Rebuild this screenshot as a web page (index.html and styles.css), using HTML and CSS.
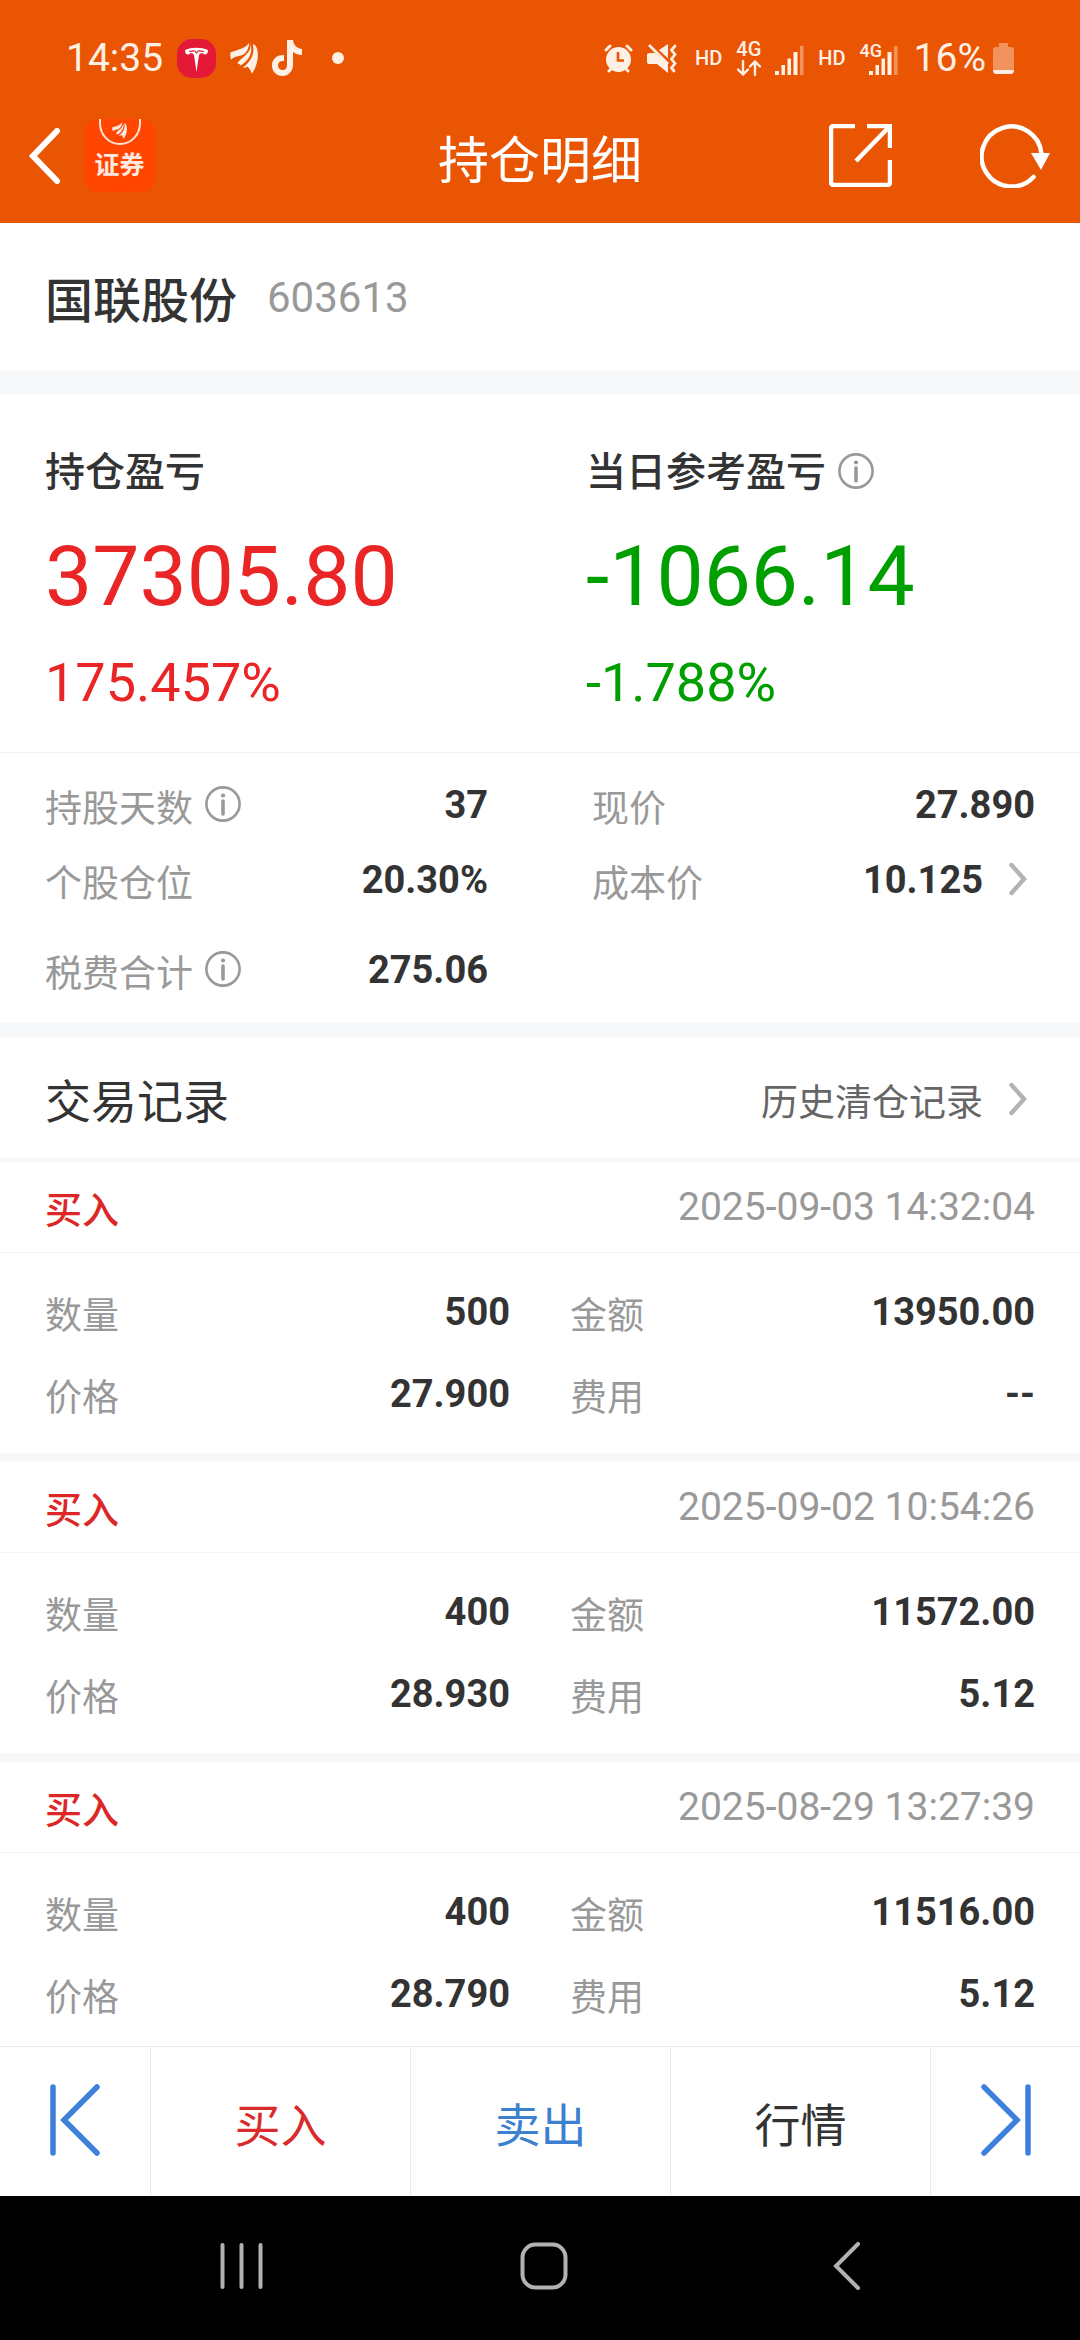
FILE: index.html
```html
<!DOCTYPE html>
<html lang="zh-CN">
<head>
  <meta charset="UTF-8">
  <meta name="viewport" content="width=device-width, initial-scale=1.0">
  <title>持仓明细</title>
  <link rel="stylesheet" href="styles.css">
</head>
<body>
  <svg class="sprite" aria-hidden="true">
    <symbol id="info" viewBox="0 0 36 36">
      <circle cx="18" cy="18" r="16.6" fill="none" stroke="#999" stroke-width="2.6"/>
      <circle cx="18" cy="9.5" r="2.1" fill="#999"/>
      <path d="M18 15v13" stroke="#999" stroke-width="3.6" stroke-linecap="round"/>
    </symbol>
    <symbol id="arrow" viewBox="0 0 18 34">
      <path d="M2.5 3L15 17L2.5 31" fill="none" stroke="#b3b3b3" stroke-width="4.4" stroke-linecap="round"/>
    </symbol>
    <symbol id="bird" viewBox="0 0 86 98">
      <path d="M59 2C48 20 16 26 1 32C0 40 1 48 4 54C12 44 28 44 38 40C50 34 58 20 59 2Z"/>
      <path d="M62 4C66 18 58 32 46 42C34 52 26 58 22 66C27 66 30 68 32 72C52 62 74 36 62 4Z"/>
      <path d="M70 6C84 10 87 30 85 50C83 68 76 86 67 97C64 88 60 80 53 75C48 80 44 80 40 78C62 62 78 38 70 6Z"/>
    </symbol>
    <symbol id="signal" viewBox="0 0 29 29">
      <path d="M0 25h4v4h-4zM6.5 19h3.5v10h-3.5zM12.5 12.5h3.5v16.5h-3.5zM18.5 6h4v23h-4z"/>
      <path d="M25 0h3.5v29h-3.5z" opacity=".4"/>
    </symbol>
  </svg>

  <div class="app">
    <header class="top">
      <div class="status">
        <div class="status-left">
          <span class="clock">14:35</span>
          <svg width="39" height="39" viewBox="0 0 39 39">
            <rect width="39" height="39" rx="15" fill="#e31937"/>
            <path d="M8 11C15 8 24 8 31 11L30.5 14C29 16 27 16 26 14.5C23 13.5 22 15 21.7 18L19.5 33L17.3 18C17 15 16 13.5 13 14.5C12 16 10 16 8.5 14Z" fill="#fff"/>
            <path d="M12 12.5Q16 11.5 18 12L19.5 14L21 12Q23 11.5 27 12.5" fill="none" stroke="#e31937" stroke-width="1.1"/>
          </svg>
          <svg class="cream" width="28" height="32"><use href="#bird"/></svg>
          <svg class="cream" width="30" height="36" viewBox="0 0 30 36">
            <path d="M15 0H21C21.5 5 25 8.5 30 9V15C26.5 15 23.5 14 21 12V25C21 31 16.5 36 10.5 36C4.5 36 0 31.5 0 25.5C0 19 5 14.5 12 15V21C8 20.5 6 22.5 6 25.5C6 28 8 30 10.5 30C13.5 30 15 28 15 25Z"/>
          </svg>
          <span class="dot"></span>
        </div>
        <div class="status-right">
          <svg class="cream" width="29" height="29" viewBox="0 0 29 29">
            <path d="M2 6L6 2M27 6L23 2M5 27L8 24M24 27L21 24" stroke="#fff0e6" stroke-width="3" stroke-linecap="round"/>
            <circle cx="14.5" cy="15.5" r="12.5"/>
            <path d="M14 8V16.5H20" fill="none" stroke="#e95503" stroke-width="2.6"/>
          </svg>
          <svg class="cream mute" width="30" height="29" viewBox="0 0 30 29">
            <path d="M0 11Q0 9 2 9H8L21 21V29L10 20H2Q0 20 0 18ZM12 6L21 0V14.5Z"/>
            <path d="M2 1L21 20" stroke="#fff0e6" stroke-width="2.6"/>
            <path d="M28 2L24.5 6L28 10.5L24.5 15L28 19.5L24.5 24L27 27" fill="none" stroke="#fff0e6" stroke-width="2.8" stroke-linecap="round"/>
          </svg>
          <span class="net">HD</span>
          <div class="net-stack">
            <span class="net">4G</span>
            <svg width="24" height="16" viewBox="0 0 24 16">
              <path d="M6 1V14M1 9.5L6 14.5L11 9.5M18 15V2M13 6.5L18 1.5L23 6.5" fill="none" stroke="#fff0e6" stroke-width="2.4" stroke-linecap="round"/>
            </svg>
          </div>
          <svg class="cream signal"><use href="#signal"/></svg>
          <span class="net">HD</span>
          <div class="net-overlap">
            <span class="net small">4G</span>
            <svg class="cream signal"><use href="#signal"/></svg>
          </div>
          <div class="battery">
            <span class="clock">16%</span>
            <svg class="cream" width="21" height="31" viewBox="0 0 21 31">
              <path d="M6 0H15V4H18Q21 4 21 7V27H0V7Q0 4 3 4H6Z" opacity=".4"/>
              <path d="M0 27H21Q21 31 18 31H3Q0 31 0 27Z"/>
            </svg>
          </div>
        </div>
      </div>

      <div class="nav">
        <div class="nav-left">
          <button class="icon-btn" aria-label="返回">
            <svg width="31" height="56" viewBox="0 0 31 56">
              <path d="M28 3L4 28L28 53" fill="none" stroke="#fff" stroke-width="6" stroke-linecap="round"/>
            </svg>
          </button>
          <div class="logo">
            <svg width="42" height="27" viewBox="0 0 42 27">
              <path d="M1 0V4C1 15 9 25 21 25S41 15 41 4V0" fill="none" stroke="#ffe3d8" stroke-width="2"/>
              <use href="#bird" x="13" y="3" width="15" height="17" fill="#ffe9e0"/>
            </svg>
            <span>证券</span>
          </div>
        </div>
        <h1 class="title">持仓明细</h1>
        <div class="nav-right">
          <button class="icon-btn" aria-label="分享">
            <svg width="63" height="63" viewBox="0 0 63 63">
              <path d="M26 2H5Q2 2 2 5V58Q2 61 5 61H58Q61 61 61 58V36M61 24V2H38M61 2L27 37" fill="none" stroke="#fff" stroke-width="4.5"/>
            </svg>
          </button>
          <button class="icon-btn" aria-label="刷新">
            <svg width="71" height="64" viewBox="0 0 71 64">
              <path d="M53.5 53A30 30 0 1 1 61.5 30" fill="none" stroke="#fff" stroke-width="4.5" stroke-linecap="round"/>
              <path d="M51 29H70L61 46Z" fill="#fff"/>
            </svg>
          </button>
        </div>
      </div>
    </header>

    <main class="content">
      <section class="stock">
        <h2 class="stock-name">国联股份</h2>
        <span class="stock-code">603613</span>
      </section>

      <section class="profit">
        <div class="profit-col red">
          <h3 class="profit-title">持仓盈亏</h3>
          <p class="profit-num">37305.80</p>
          <p class="profit-pct">175.457%</p>
        </div>
        <div class="profit-col green">
          <h3 class="profit-title">当日参考盈亏 <svg class="info"><use href="#info"/></svg></h3>
          <p class="profit-num">-1066.14</p>
          <p class="profit-pct">-1.788%</p>
        </div>
      </section>

      <dl class="details">
        <div class="pair"><dt>持股天数 <svg class="info"><use href="#info"/></svg></dt><dd>37</dd></div>
        <div class="pair"><dt>现价</dt><dd>27.890</dd></div>
        <div class="pair"><dt>个股仓位</dt><dd>20.30%</dd></div>
        <div class="pair"><dt>成本价</dt><dd>10.125 <svg class="arrow"><use href="#arrow"/></svg></dd></div>
        <div class="pair"><dt>税费合计 <svg class="info"><use href="#info"/></svg></dt><dd>275.06</dd></div>
      </dl>

      <section class="history">
        <h2 class="history-title">交易记录</h2>
        <a class="history-link" href="#">历史清仓记录 <svg class="arrow"><use href="#arrow"/></svg></a>
      </section>

      <article class="record">
        <div class="record-head"><h3>买入</h3><time>2025-09-03 14:32:04</time></div>
        <dl class="record-body">
          <div class="pair"><dt>数量</dt><dd>500</dd></div>
          <div class="pair"><dt>金额</dt><dd>13950.00</dd></div>
          <div class="pair"><dt>价格</dt><dd>27.900</dd></div>
          <div class="pair"><dt>费用</dt><dd>--</dd></div>
        </dl>
      </article>
      <article class="record">
        <div class="record-head"><h3>买入</h3><time>2025-09-02 10:54:26</time></div>
        <dl class="record-body">
          <div class="pair"><dt>数量</dt><dd>400</dd></div>
          <div class="pair"><dt>金额</dt><dd>11572.00</dd></div>
          <div class="pair"><dt>价格</dt><dd>28.930</dd></div>
          <div class="pair"><dt>费用</dt><dd>5.12</dd></div>
        </dl>
      </article>
      <article class="record">
        <div class="record-head"><h3>买入</h3><time>2025-08-29 13:27:39</time></div>
        <dl class="record-body">
          <div class="pair"><dt>数量</dt><dd>400</dd></div>
          <div class="pair"><dt>金额</dt><dd>11516.00</dd></div>
          <div class="pair"><dt>价格</dt><dd>28.790</dd></div>
          <div class="pair"><dt>费用</dt><dd>5.12</dd></div>
        </dl>
      </article>
    </main>

    <footer class="bottom">
      <div class="actions">
        <button class="step" aria-label="上一只">
          <svg width="50" height="72" viewBox="0 0 50 72">
            <path d="M3 3V69M47 3L14 36L47 69" fill="none" stroke="#3c80dc" stroke-width="5.5" stroke-linecap="round"/>
          </svg>
        </button>
        <button class="action buy">买入</button>
        <button class="action sell">卖出</button>
        <button class="action">行情</button>
        <button class="step" aria-label="下一只">
          <svg width="50" height="72" viewBox="0 0 50 72">
            <path d="M47 3V69M3 3L36 36L3 69" fill="none" stroke="#3c80dc" stroke-width="5.5" stroke-linecap="round"/>
          </svg>
        </button>
      </div>
      <div class="system">
        <button class="system-btn" aria-label="最近任务">
          <svg width="43" height="48" viewBox="0 0 43 48">
            <path d="M2.5 3V45M21.5 3V45M40.5 3V45" stroke="#b2b2b2" stroke-width="4" stroke-linecap="round"/>
          </svg>
        </button>
        <button class="system-btn" aria-label="主屏幕">
          <svg width="48" height="48" viewBox="0 0 48 48">
            <rect x="2.5" y="2.5" width="43" height="43" rx="13" fill="none" stroke="#b2b2b2" stroke-width="4"/>
          </svg>
        </button>
        <button class="system-btn" aria-label="返回上一级">
          <svg width="28" height="48" viewBox="0 0 28 48">
            <path d="M25 2L3 24L25 46" fill="none" stroke="#b2b2b2" stroke-width="4" stroke-linecap="round"/>
          </svg>
        </button>
      </div>
    </footer>
  </div>
</body>
</html>
```
FILE: styles.css
```css
* {
  box-sizing: border-box;
  margin: 0;
  padding: 0;
}
body {
  font-family: Roboto, "Noto Sans CJK SC", sans-serif;
  color: #333;
  background: #fff;
}
button {
  font-family: inherit;
  border: none;
  background: none;
  cursor: pointer;
}
svg {
  display: block;
  flex: none;
}
.sprite {
  display: none;
}
.app {
  display: flex;
  flex-direction: column;
  height: 100vh;
}

/* header */
.top {
  flex: none;
  background: #e95503;
  color: #fff;
}
.status {
  display: flex;
  justify-content: space-between;
  height: 88px;
  padding: 28px 66px 0;
  color: #fff0e6;
}
.status-left,
.status-right {
  display: flex;
  align-items: center;
  gap: 14px;
}
.cream {
  fill: #fff0e6;
}
.clock {
  font-size: 39px;
}
.dot {
  width: 12px;
  height: 12px;
  margin-left: 16px;
  border-radius: 50%;
  background: #fff0e6;
}
.mute {
  margin-right: 4px;
}
.net {
  font-size: 20px;
  font-weight: 500;
  line-height: 18px;
}
.small {
  font-size: 18px;
}
.net-stack {
  display: flex;
  flex-direction: column;
  align-items: center;
  gap: 2px;
}
.net-overlap {
  display: grid;
  width: 38px;
}
.net-overlap > * {
  grid-area: 1 / 1;
}
.net-overlap svg {
  justify-self: end;
  align-self: end;
}
.signal {
  width: 29px;
  height: 29px;
  margin-top: 4px;
}
.battery {
  display: flex;
  align-items: center;
  gap: 7px;
  margin-left: 2px;
}
.nav {
  display: grid;
  grid-template-columns: 1fr auto 1fr;
  align-items: center;
  height: 135px;
  padding: 0 29px;
}
.nav-left {
  display: flex;
  align-items: center;
  gap: 24px;
}
.nav-right {
  display: flex;
  align-items: center;
  justify-content: flex-end;
  gap: 88px;
}
.title {
  padding-top: 2px;
  font-size: 51px;
  font-weight: 400;
}
.logo {
  display: flex;
  flex-direction: column;
  align-items: center;
  width: 71px;
  height: 73px;
  border-radius: 14px;
  background: #ff4500;
  color: #ffe9e0;
  font-size: 25px;
  font-weight: 700;
  line-height: 40px;
}

/* content */
.content {
  flex: 1;
  min-height: 0;
  overflow-y: auto;
  scrollbar-width: none;
}
.stock {
  display: flex;
  align-items: center;
  gap: 30px;
  height: 147px;
  padding: 0 45px;
}
.stock-name {
  font-size: 48px;
  font-weight: 500;
}
.stock-code {
  padding-top: 2px;
  font-size: 42px;
  color: #999;
}
.profit {
  display: grid;
  grid-template-columns: 1fr 1fr;
  gap: 92px;
  padding: 51px 45px 39px;
  border-top: 24px solid #f7f8fa;
}
.profit-col {
  display: flex;
  flex-direction: column;
  gap: 26px;
}
.profit-title {
  display: flex;
  align-items: center;
  gap: 12px;
  font-size: 40px;
  font-weight: 500;
  line-height: 56px;
  color: #333;
}
.profit-num {
  font-size: 84px;
  line-height: 100px;
}
.profit-pct {
  font-size: 54px;
  line-height: 60px;
}
.red {
  color: #ea2525;
}
.green {
  color: #009f00;
}
.info {
  width: 36px;
  height: 36px;
  margin-bottom: 4px;
}
.arrow {
  width: 18px;
  height: 34px;
  margin: 0 8px 2px 14px;
}
.details {
  display: grid;
  grid-template-columns: 1fr 1fr;
  grid-auto-rows: 75px 75px 106px;
  column-gap: 104px;
  padding: 14px 45px 0;
  border-top: 1px solid #f2f2f2;
  border-bottom: 15px solid #f7f8fa;
}
.pair {
  display: flex;
  align-items: center;
  justify-content: space-between;
}
.pair dt {
  display: flex;
  align-items: center;
  gap: 12px;
  padding-top: 2px;
  font-size: 37px;
  color: #999;
}
.pair dd {
  display: flex;
  align-items: center;
  gap: 12px;
  font-size: 38px;
  font-weight: 700;
}
.history {
  display: flex;
  align-items: center;
  justify-content: space-between;
  height: 124px;
  padding: 0 45px;
  border-bottom: 4px solid #f7f8fa;
}
.history-title {
  font-size: 46px;
  font-weight: 400;
}
.history-link {
  display: flex;
  align-items: center;
  gap: 12px;
  padding-top: 4px;
  font-size: 37px;
  color: #666;
  text-decoration: none;
}
.record {
  border-bottom: 9px solid #f7f8fa;
}
.record-head {
  display: flex;
  align-items: center;
  justify-content: space-between;
  height: 91px;
  padding: 0 45px;
  border-bottom: 1px solid #f5f5f5;
}
.record-head h3 {
  padding-top: 2px;
  font-size: 37px;
  font-weight: 500;
  color: #dd2727;
}
.record-head time {
  font-size: 39px;
  color: #999;
}
.record-body {
  display: grid;
  grid-template-columns: 1fr 1fr;
  grid-auto-rows: 82px;
  column-gap: 60px;
  padding: 18px 45px;
}

/* footer */
.bottom {
  flex: none;
}
.actions {
  display: flex;
  height: 150px;
  border-top: 1px solid #ebebeb;
}
.actions button + button {
  border-left: 1px solid #ebebeb;
}
.step {
  display: flex;
  align-items: center;
  justify-content: center;
  width: 150px;
  padding-bottom: 4px;
}
.action {
  flex: 1;
  font-size: 46px;
  color: #333;
}
.buy {
  color: #d92b2b;
}
.sell {
  color: #3c80d0;
}
.system {
  display: flex;
  height: 144px;
  padding: 0 82px 4px 90px;
  background: #000;
}
.system-btn {
  display: flex;
  flex: 1;
  align-items: center;
  justify-content: center;
}
```
